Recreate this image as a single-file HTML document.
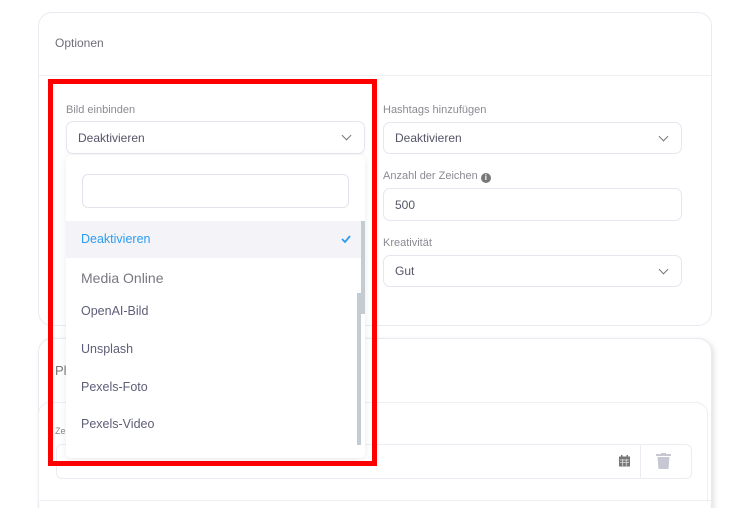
<!DOCTYPE html>
<html style="width:741px;height:508px;overflow:hidden"><head><meta charset="utf-8"><style>
*{box-sizing:border-box;margin:0;padding:0}
body{width:741px;height:508px;background:#fff;font-family:"Liberation Sans",sans-serif;position:relative;overflow:hidden}
.abs{position:absolute}
.card{border:1px solid #e9eaf0;border-radius:14px;background:#fff}
.lbl{font-size:11px;color:#8a8a92}
.inp{border:1px solid #e6e6ef;border-radius:7px;background:#fff;font-size:12px;color:#555568;padding-left:11px;display:flex;align-items:center}
.chev{position:absolute;right:14px;top:10px;width:7px;height:7px;border-right:1.3px solid #777;border-bottom:1.3px solid #777;transform:rotate(45deg)}
.opt{position:absolute;left:81px;font-size:12.5px;color:#5e5e78}
</style></head><body>
<div class="abs card" style="left:38px;top:12px;width:674px;height:314px"></div>
<div class="abs" style="left:38px;top:75px;width:674px;height:1px;background:#eeeef3"></div>
<div class="abs" style="left:55px;top:36px;font-size:12px;color:#6e6e78">Optionen</div>

<div class="abs lbl" style="left:383px;top:104px">Hashtags hinzufügen</div>
<div class="abs inp" style="left:383px;top:122px;width:299px;height:32px">Deaktivieren<span class="chev"></span></div>
<div class="abs lbl" style="left:383px;top:170px">Anzahl der Zeichen <span style="display:inline-block;width:10px;height:10px;border-radius:50%;background:#777;color:#fff;font-size:8px;text-align:center;line-height:10px;font-weight:bold;vertical-align:-1px">i</span></div>
<div class="abs inp" style="left:383px;top:188px;width:299px;height:33px">500</div>
<div class="abs lbl" style="left:383px;top:237px">Kreativität</div>
<div class="abs inp" style="left:383px;top:255px;width:299px;height:32px">Gut<span class="chev"></span></div>

<div class="abs card" style="left:38px;top:338px;width:674px;height:180px;box-shadow:2px 2px 6px rgba(0,0,0,.12)"></div>
<div class="abs" style="left:55px;top:363px;font-size:13px;color:#777">Pl</div>
<div class="abs" style="left:38px;top:402px;width:670px;height:100px;border:1px solid #eeeef3;border-bottom:none;border-radius:12px 12px 0 0"></div>
<div class="abs" style="left:55px;top:426px;font-size:9px;color:#888">Ze</div>
<div class="abs" style="left:56px;top:444px;width:636px;height:35px;border:1px solid #ececf2;border-radius:6px"></div>
<div class="abs" style="left:640px;top:444px;width:1px;height:35px;background:#ececf2"></div>
<svg class="abs" style="left:619px;top:455px" width="11" height="12" viewBox="0 0 11 12"><rect x="0" y="1.5" width="11" height="10" fill="#777"/><rect x="2" y="0" width="1.5" height="3" fill="#777"/><rect x="7.5" y="0" width="1.5" height="3" fill="#777"/><path d="M1 5h9M1 7.5h9M3.7 4v7M7.3 4v7" stroke="#ddd" stroke-width=".8"/></svg>
<svg class="abs" style="left:656px;top:453px" width="15" height="16" viewBox="0 0 15 16"><rect x="0" y="1" width="15" height="2" fill="#c7c7d4"/><rect x="5" y="0" width="5" height="2" fill="#c7c7d4"/><path d="M1.5 4h12l-1 12h-10z" fill="#c7c7d4"/></svg>
<div class="abs" style="left:38px;top:500px;width:674px;height:1px;background:#eeeef3"></div>

<div class="abs" style="left:48px;top:79px;width:329px;height:387px;border:5px solid #f00"></div>
<div class="abs lbl" style="left:66px;top:104px">Bild einbinden</div>
<div class="abs inp" style="left:66px;top:121px;width:299px;height:33px;box-shadow:0 2px 4px rgba(0,0,0,.04)">Deaktivieren<span class="chev"></span></div>
<div class="abs" style="left:66px;top:155px;width:299px;height:303px;background:#fff;border-radius:5px;box-shadow:0 2px 8px rgba(0,0,0,.08);overflow:hidden">
 <div class="abs" style="left:16px;top:19px;width:267px;height:34px;border:1px solid #e3e3ee;border-radius:6px"></div>
 <div class="abs" style="left:0;top:66px;width:299px;height:37px;background:#f4f4f8"></div>
 <div class="abs" style="left:15px;top:77px;font-size:12.5px;color:#2c9cf0">Deaktivieren</div>
 <svg class="abs" style="left:275px;top:80px" width="10" height="8" viewBox="0 0 10 8"><path d="M1 4l3 3 5-6" stroke="#2c9cf0" stroke-width="1.8" fill="none"/></svg>
 <div class="abs" style="left:15px;top:115px;font-size:14px;color:#777780">Media Online</div>
 <div class="abs" style="left:295px;top:66px;width:4px;height:93px;background:#c3cbd3"></div>
 <div class="abs" style="left:291px;top:138px;width:4px;height:152px;background:#c3cbd3"></div>
</div>
<div class="opt" style="top:304px">OpenAI-Bild</div>
<div class="opt" style="top:342px">Unsplash</div>
<div class="opt" style="top:380px">Pexels-Foto</div>
<div class="opt" style="top:417px">Pexels-Video</div>
<div class="abs" style="left:67px;top:457px;width:300px;height:4px;overflow:hidden"><span style="font-size:9px;color:#777;position:relative;top:-2px">15:56</span></div>
</body></html>
